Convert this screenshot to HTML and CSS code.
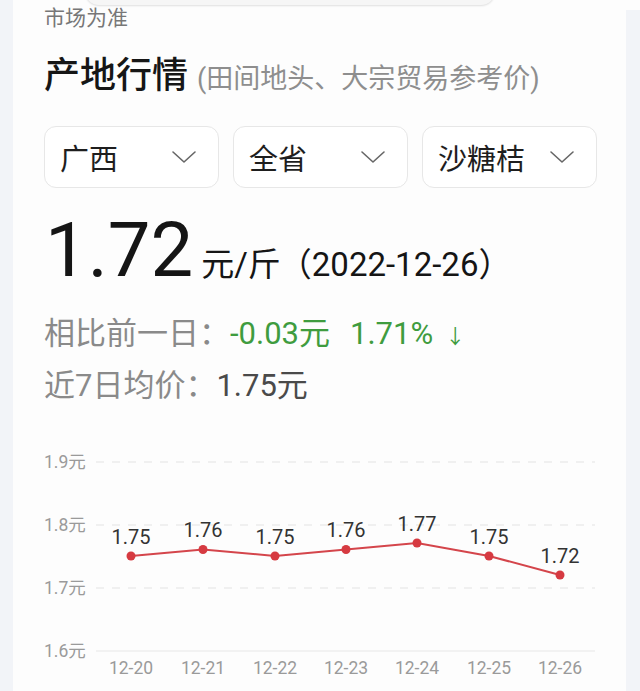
FILE: index.html
```html
<!DOCTYPE html>
<html lang="zh-CN">
<head>
<meta charset="utf-8">
<title>产地行情</title>
<link rel="stylesheet" href="styles.css">
</head>
<body>
<div class="topbar"></div>
<div class="card">
  <div class="note">市场为准</div>
  <div class="title-row">
    <span class="title">产地行情</span>
    <span class="subtitle">(田间地头、大宗贸易参考价)</span>
  </div>
  <div class="selects">
    <div class="select"><span>广西</span><svg class="chev" viewBox="0 0 26 14" width="26" height="14"><polyline points="2,2 13,12 24,2" fill="none" stroke="#666" stroke-width="1.6" stroke-linecap="round" stroke-linejoin="round"/></svg></div>
    <div class="select"><span>全省</span><svg class="chev" viewBox="0 0 26 14" width="26" height="14"><polyline points="2,2 13,12 24,2" fill="none" stroke="#666" stroke-width="1.6" stroke-linecap="round" stroke-linejoin="round"/></svg></div>
    <div class="select"><span>沙糖桔</span><svg class="chev" viewBox="0 0 26 14" width="26" height="14"><polyline points="2,2 13,12 24,2" fill="none" stroke="#666" stroke-width="1.6" stroke-linecap="round" stroke-linejoin="round"/></svg></div>
  </div>
  <div class="price-row">
    <span class="price">1.72</span>
    <span class="unit">元/斤</span>
    <span class="date">（2022-12-26）</span>
  </div>
  <div class="info-row first">
    <span class="label">相比前一日：</span>
    <span class="green">-0.03元</span>
    <span class="green pct">1.71%</span>
    <span class="green arrow">↓</span>
  </div>
  <div class="info-row avg">
    <span class="label">近7日均价：</span>
    <span class="avg-val">1.75元</span>
  </div>
  <svg class="chart" viewBox="0 0 613 251" width="613" height="251">
    <g class="grid">
      <line x1="83" y1="22" x2="582" y2="22" stroke="#ebebeb" stroke-width="1.5" stroke-dasharray="8 8"/>
      <line x1="83" y1="85" x2="582" y2="85" stroke="#ebebeb" stroke-width="1.5" stroke-dasharray="8 8"/>
      <line x1="83" y1="148" x2="582" y2="148" stroke="#ebebeb" stroke-width="1.5" stroke-dasharray="8 8"/>
      <line x1="83" y1="211" x2="582" y2="211" stroke="#eeeeee" stroke-width="1.5"/>
    </g>
    <g class="ylab" fill="#9a9a9a" font-size="17.5">
      <text x="31" y="28">1.9元</text>
      <text x="31" y="91">1.8元</text>
      <text x="31" y="154">1.7元</text>
      <text x="31" y="217">1.6元</text>
    </g>
    <polyline points="118,116 190,109.5 262,116 333,109.5 404,103 476,116 547,135" fill="none" stroke="#d4454b" stroke-width="2"/>
    <g fill="#d63a41">
      <circle cx="118" cy="116" r="4.5"/>
      <circle cx="190" cy="109.5" r="4.5"/>
      <circle cx="262" cy="116" r="4.5"/>
      <circle cx="333" cy="109.5" r="4.5"/>
      <circle cx="404" cy="103" r="4.5"/>
      <circle cx="476" cy="116" r="4.5"/>
      <circle cx="547" cy="135" r="4.5"/>
    </g>
    <g class="vlab" fill="#333" font-size="20" text-anchor="middle">
      <text x="118" y="104">1.75</text>
      <text x="190" y="97">1.76</text>
      <text x="262" y="104">1.75</text>
      <text x="333" y="97">1.76</text>
      <text x="404" y="91">1.77</text>
      <text x="476" y="104">1.75</text>
      <text x="547" y="123">1.72</text>
    </g>
    <g class="xlab" fill="#9a9a9a" font-size="17.5" text-anchor="middle">
      <text x="118" y="234">12-20</text>
      <text x="190" y="234">12-21</text>
      <text x="262" y="234">12-22</text>
      <text x="333" y="234">12-23</text>
      <text x="404" y="234">12-24</text>
      <text x="476" y="234">12-25</text>
      <text x="547" y="234">12-26</text>
    </g>
  </svg>
</div>
</body>
</html>
```
FILE: styles.css
```css
html, body {
  margin: 0;
  padding: 0;
}
body {
  background: #f2f4f8;
  font-family: Roboto, "Noto Sans CJK SC", sans-serif;
  width: 640px;
  height: 691px;
  overflow: hidden;
  position: relative;
}
.topbar {
  position: absolute;
  left: 85px;
  top: -20px;
  width: 410px;
  height: 25px;
  background: #f6f6f6;
  border-radius: 0 0 14px 14px;
  box-shadow: 0 1px 2px rgba(0,0,0,0.12);
  z-index: 2;
}
.card {
  margin-left: 13px;
  width: 613px;
  height: 691px;
  background: #fdfdfd;
  padding-left: 31px;
  box-sizing: border-box;
  position: relative;
}
.card::after {
  content: "";
  position: absolute;
  right: -14px;
  top: 0;
  width: 14px;
  height: 10px;
  background: #fdfdfd;
}
.note {
  padding-top: 4px;
  font-size: 21px;
  line-height: 28px;
  color: #777;
}
.title-row {
  margin-top: 22px;
  display: flex;
  align-items: baseline;
  gap: 9px;
  line-height: 44px;
}
.title {
  font-size: 36px;
  font-weight: 500;
  color: #161616;
}
.subtitle {
  font-size: 27px;
  color: #8e8e8e;
}
.selects {
  margin-top: 25px;
  width: 553px;
  display: flex;
  gap: 14px;
}
.select {
  flex: 1;
  height: 62px;
  box-sizing: border-box;
  border: 1.5px solid #e7e7e7;
  border-radius: 12px;
  background: #fff;
  display: flex;
  align-items: center;
  justify-content: space-between;
  padding: 0 21px 0 15px;
  font-size: 29px;
  color: #1e1e1e;
}
.chev {
  display: block;
}
.price-row {
  margin-top: 22px;
  display: flex;
  align-items: baseline;
  line-height: 80px;
  color: #151515;
}
.price {
  font-size: 76px;
  margin-left: 1px;
  margin-right: 8px;
}
.unit, .date {
  font-size: 33px;
}
.date {
  margin-left: -2px;
}
.info-row {
  display: flex;
  align-items: baseline;
  line-height: 40px;
  font-size: 31px;
}
.info-row.first {
  margin-top: 9px;
}
.info-row.avg {
  margin-top: 9px;
}
.label {
  color: #8a8a8a;
}
.green {
  color: #3f9c3f;
}
.pct {
  margin-left: 20px;
}
.arrow {
  font-size: 20px;
  margin-left: 12px;
}
.avg-val {
  color: #4a4a4a;
}
.chart {
  display: block;
  margin-top: 34px;
  margin-left: -31px;
  font-family: Roboto, "Noto Sans CJK SC", sans-serif;
}
```
